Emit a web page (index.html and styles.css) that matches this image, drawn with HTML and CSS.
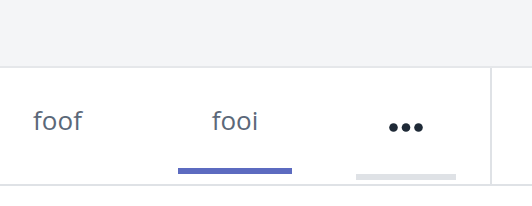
FILE: index.html
```html
<!DOCTYPE html>
<html>
<head>
<meta charset="utf-8">
<link rel="stylesheet" href="styles.css">
</head>
<body>
<div class="header"></div>
<div class="tabbar">
  <div class="tabs">
    <div class="tab tab-1"><span class="label">foof</span></div>
    <div class="tab tab-2"><span class="label">fooi</span><span class="bar bar-active"></span></div>
    <div class="tab tab-3">
      <svg class="dots" width="34" height="9" viewBox="0 0 34 9"><circle cx="4.5" cy="4.5" r="4.3"/><circle cx="17" cy="4.5" r="4.3"/><circle cx="29.5" cy="4.5" r="4.3"/></svg>
      <span class="bar bar-muted"></span>
    </div>
  </div>
</div>
</body>
</html>
```
FILE: styles.css
```css
html, body {
  margin: 0;
  padding: 0;
  background: #ffffff;
}
body {
  font-family: "Open Sans", "Liberation Sans", sans-serif;
}
.header {
  height: 66px;
  background: #f4f5f7;
  border-bottom: 2px solid #e5e7ea;
}
.tabbar {
  display: flex;
  height: 116px;
  border-bottom: 2px solid #dfe2e6;
}
.tabs {
  display: flex;
  gap: 63px;
  width: 490px;
  border-right: 2px solid #dfe2e6;
}
.tab {
  display: flex;
  flex-direction: column;
  align-items: center;
  padding-top: 34px;
}
.tab-1 { width: 115px; }
.tab-2 { width: 114px; margin-right: 1px; }
.tab-3 { width: 100px; }
.label {
  font-size: 26px;
  line-height: 36px;
  color: #5b6879;
}
.bar {
  display: block;
  align-self: stretch;
  height: 6px;
}
.bar-active {
  margin-top: 30px;
  background: #5c6bc0;
}
.dots {
  display: block;
  margin-top: 21px;
  fill: #1f2a37;
}
.bar-muted {
  margin-top: 42px;
  background: #dfe2e6;
}
```
